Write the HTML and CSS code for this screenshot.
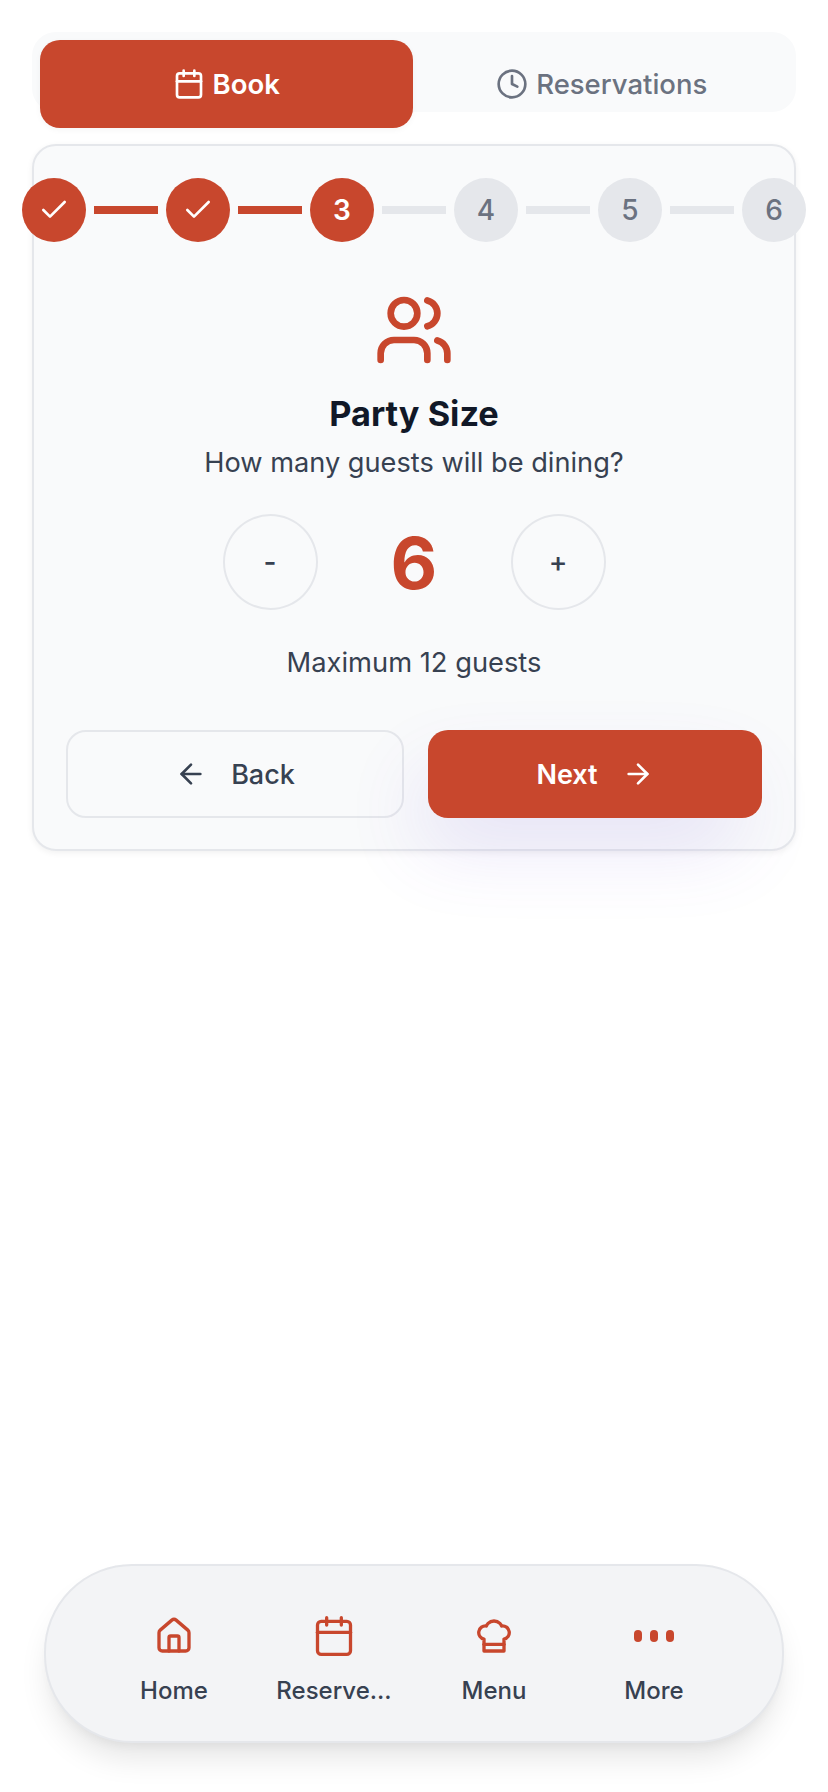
FILE: index.html
```html
<!DOCTYPE html>
<html lang="en">
<head>
    <meta charset="UTF-8">
    <meta name="viewport" content="width=device-width, initial-scale=1.0">
    <title>Book a Table</title>
    <link rel="stylesheet" href="styles.css">
</head>
<body>
    <div class="tabs">
        <button type="button" class="tab tab-active">
            <svg class="icon icon-tab" viewBox="0 0 24 24"><path d="M8 2v4"/><path d="M16 2v4"/><rect x="3" y="4" width="18" height="18" rx="2"/><path d="M3 10h18"/></svg>
            Book
        </button>
        <button type="button" class="tab">
            <svg class="icon icon-tab" viewBox="0 0 24 24"><circle cx="12" cy="12" r="10"/><path d="M12 6v6l4 2"/></svg>
            Reservations
        </button>
    </div>

    <div class="card">
        <div class="steps">
            <div class="step step-on"><svg class="icon icon-check" viewBox="0 0 24 24"><path d="M20 6 9 17l-5-5"/></svg></div>
            <div class="step-line step-line-on"></div>
            <div class="step step-on"><svg class="icon icon-check" viewBox="0 0 24 24"><path d="M20 6 9 17l-5-5"/></svg></div>
            <div class="step-line step-line-on"></div>
            <div class="step step-on">3</div>
            <div class="step-line"></div>
            <div class="step">4</div>
            <div class="step-line"></div>
            <div class="step">5</div>
            <div class="step-line"></div>
            <div class="step">6</div>
        </div>

        <svg class="icon icon-party" viewBox="0 0 24 24"><path d="M16 21v-2a4 4 0 0 0-4-4H6a4 4 0 0 0-4 4v2"/><circle cx="9" cy="7" r="4"/><path d="M22 21v-2a4 4 0 0 0-3-3.87"/><path d="M16 3.13a4 4 0 0 1 0 7.75"/></svg>
        <h2 class="title">Party Size</h2>
        <p class="subtitle">How many guests will be dining?</p>

        <div class="counter">
            <button type="button" class="counter-btn">-</button>
            <div class="counter-value">6</div>
            <button type="button" class="counter-btn">+</button>
        </div>
        <p class="hint">Maximum 12 guests</p>

        <div class="actions">
            <button type="button" class="action action-back">
                <svg class="icon icon-tab" viewBox="0 0 24 24"><path d="m12 19-7-7 7-7"/><path d="M19 12H5"/></svg>
                Back
            </button>
            <button type="button" class="action action-next">
                Next
                <svg class="icon icon-tab" viewBox="0 0 24 24"><path d="M5 12h14"/><path d="m12 5 7 7-7 7"/></svg>
            </button>
        </div>
    </div>

    <nav class="bottom-nav">
        <a href="#" class="nav-item">
            <span class="nav-icon"><svg class="icon icon-home" viewBox="0 0 24 24"><path d="M15 21v-8a1 1 0 0 0-1-1h-4a1 1 0 0 0-1 1v8"/><path d="M3 10a2 2 0 0 1 .709-1.528l7-5.999a2 2 0 0 1 2.582 0l7 5.999A2 2 0 0 1 21 10v9a2 2 0 0 1-2 2H5a2 2 0 0 1-2-2z"/></svg></span>
            Home
        </a>
        <a href="#" class="nav-item">
            <span class="nav-icon"><svg class="icon icon-cal" viewBox="0 0 24 24"><path d="M8 2v4"/><path d="M16 2v4"/><rect x="3" y="4" width="18" height="18" rx="2"/><path d="M3 10h18"/></svg></span>
            Reserve...
        </a>
        <a href="#" class="nav-item">
            <span class="nav-icon"><svg class="icon icon-home" viewBox="0 0 24 24"><path d="M6 13.87A4 4 0 0 1 7.41 6a5.11 5.11 0 0 1 1.05-1.54 5 5 0 0 1 7.08 0A5.11 5.11 0 0 1 16.59 6 4 4 0 0 1 18 13.87V21H6Z"/><path d="M6 17h12"/></svg></span>
            Menu
        </a>
        <a href="#" class="nav-item">
            <span class="nav-icon"><span class="dots"><i></i><i></i><i></i></span></span>
            More
        </a>
    </nav>
</body>
</html>
```

FILE: styles.css
```css
* {
    box-sizing: border-box;
}

body {
    font-family: Inter, "Noto Sans", sans-serif;
    background-color: #fff;
    color: #374151;
    margin: 0;
    padding: 32px 32px 49px;
    height: 100vh;
    display: flex;
    flex-direction: column;
}

button {
    font-family: inherit;
    cursor: pointer;
}

.icon {
    fill: none;
    stroke: currentColor;
    stroke-width: 2;
    stroke-linecap: round;
    stroke-linejoin: round;
    flex-shrink: 0;
}

.icon-tab,
.icon-check {
    width: 32px;
    height: 32px;
}

/* Top tabs */
.tabs {
    display: flex;
    height: 80px;
    padding: 8px;
    background: #f9fafb;
    border-radius: 24px;
}

.tab {
    flex: 1;
    height: 88px;
    padding: 0 0 0 3px;
    display: flex;
    align-items: center;
    justify-content: center;
    gap: 8px;
    border: none;
    border-radius: 20px;
    background: none;
    color: #6b7280;
    font-size: 27.5px;
    font-weight: 500;
}

.tab-active {
    padding: 0;
    background: #c8472d;
    color: #fff;
    font-weight: 600;
    box-shadow: 0 2px 6px rgba(0, 0, 0, 0.04);
}

/* Card */
.card {
    margin-top: 32px;
    padding: 32px 32px 31px;
    height: 707px;
    display: flex;
    flex-direction: column;
    align-items: center;
    background: #f9fafb;
    border: 2px solid #e5e7eb;
    border-radius: 24px;
    box-shadow: 0 2px 6px rgba(0, 0, 0, 0.06);
}

.steps {
    display: flex;
    align-items: center;
    justify-content: center;
    gap: 8px;
    width: 100%;
}

.step {
    width: 64px;
    height: 64px;
    flex-shrink: 0;
    display: flex;
    align-items: center;
    justify-content: center;
    border-radius: 50%;
    background: #e5e7eb;
    color: #6b7280;
    font-size: 28px;
    font-weight: 500;
}

.step-on {
    background: #c8472d;
    color: #fff;
    font-weight: 600;
}

.step-line {
    width: 64px;
    height: 8px;
    flex-shrink: 0;
    background: #e5e7eb;
}

.step-line-on {
    background: #c8472d;
}

.icon-party {
    width: 80px;
    height: 80px;
    margin-top: 48px;
    color: #c8472d;
}

.title {
    margin: 24px 0 0;
    font-size: 34.3px;
    line-height: 40px;
    font-weight: 700;
    color: #111827;
}

.subtitle {
    margin: 11px 0 0;
    font-size: 27.2px;
    line-height: 36px;
}

/* Guest counter */
.counter {
    margin-top: 33px;
    display: flex;
    align-items: center;
    gap: 64px;
}

.counter-btn {
    width: 95px;
    height: 96px;
    border: 2px solid #e5e7eb;
    border-radius: 50%;
    background: none;
    color: #374151;
    font-size: 28px;
    font-weight: 500;
}

.counter-value {
    width: 65px;
    text-align: center;
    font-size: 72px;
    font-weight: 700;
    color: #c8472d;
}

.hint {
    margin: 35px 0 0;
    font-size: 27.3px;
    line-height: 36px;
}

/* Back and next */
.actions {
    margin-top: auto;
    display: flex;
    gap: 24px;
    width: 100%;
}

.action {
    flex: 1;
    height: 88px;
    display: flex;
    align-items: center;
    justify-content: center;
    gap: 24px;
    border-radius: 20px;
    font-size: 27px;
    font-weight: 600;
}

.action-back {
    background: none;
    border: 2px solid #e5e7eb;
    color: #374151;
    font-weight: 500;
}

.action-next {
    background: #c8472d;
    border: none;
    color: #fff;
    box-shadow: -14px 36px 80px -10px rgba(109, 80, 220, 0.16);
}

/* Bottom nav */
.bottom-nav {
    margin: auto 12px 0;
    height: 179px;
    padding: 12px 48px 0;
    display: grid;
    grid-template-columns: repeat(4, 1fr);
    align-items: center;
    background: #f3f4f6;
    border: 2px solid #e5e7eb;
    border-radius: 88px;
    box-shadow: 0 20px 30px -5px rgba(0, 0, 0, 0.1), 0 8px 12px -6px rgba(0, 0, 0, 0.06);
}

.nav-item {
    display: flex;
    flex-direction: column;
    align-items: center;
    gap: 18px;
    color: #374151;
    text-decoration: none;
    font-size: 24px;
    font-weight: 500;
}

.nav-icon {
    height: 44px;
    display: flex;
    align-items: center;
    justify-content: center;
    color: #c8472d;
}

.icon-home {
    width: 40px;
    height: 40px;
}

.icon-cal {
    width: 44px;
    height: 44px;
    stroke-width: 1.8;
}

.dots {
    display: flex;
    gap: 8px;
}

.dots i {
    width: 8px;
    height: 12px;
    border-radius: 4px;
    background: currentColor;
}
```
